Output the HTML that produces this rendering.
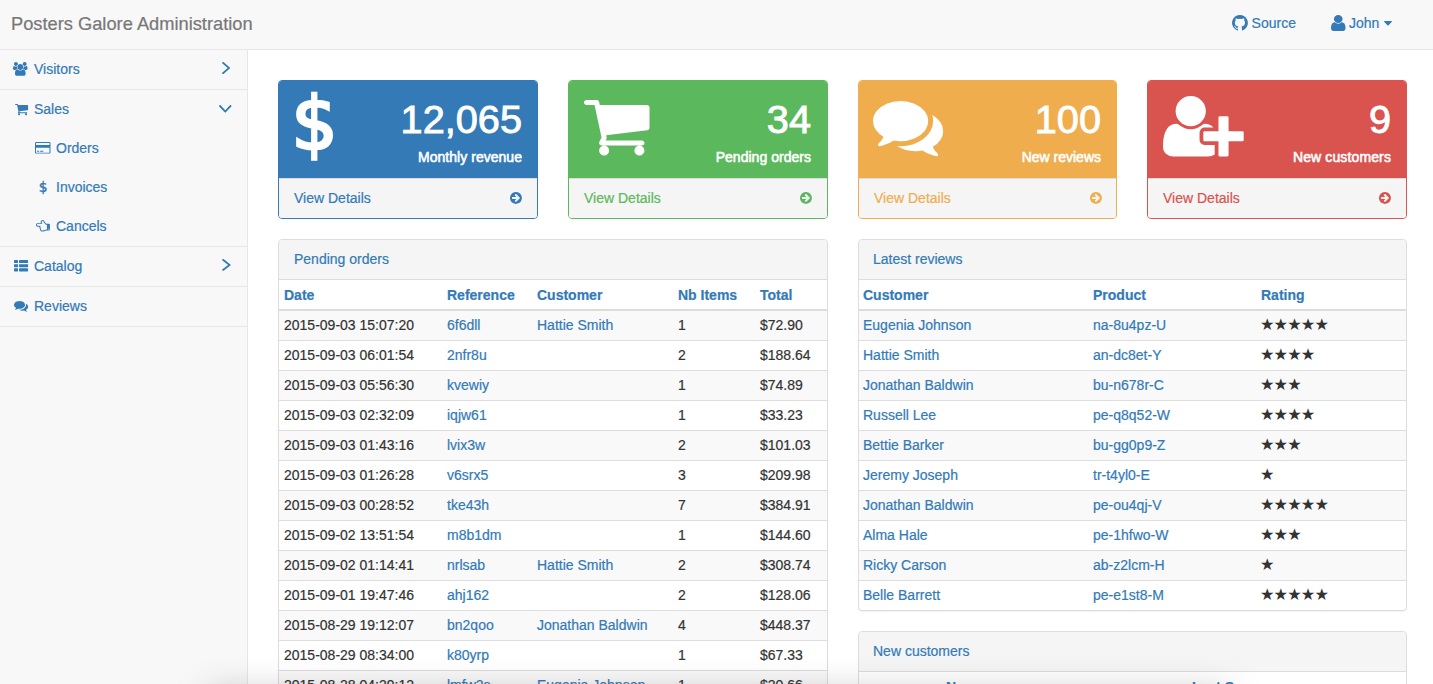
<!DOCTYPE html><html lang="en"><head><meta charset="utf-8"><title>Posters Galore Administration</title><style>
*{box-sizing:border-box}
html,body{margin:0;padding:0}
body{width:1433px;height:684px;overflow:hidden;position:relative;background:#f8f8f8;font-family:"Liberation Sans",sans-serif;font-size:14px;line-height:19px;color:#333;-webkit-text-stroke:0.2px}
a{color:#337ab7;text-decoration:none}
.ic{position:absolute;display:block;overflow:visible}
#nav{position:absolute;left:0;top:0;width:1433px;height:50px;background:#f8f8f8;border-bottom:1px solid #e7e7e7}
#brand{position:absolute;left:11px;top:0;font-size:18.28px;line-height:48px;color:#777;white-space:nowrap}
.tr{position:absolute;top:0;line-height:47px;white-space:nowrap}
#side{position:absolute;left:0;top:50px;width:248px;height:634px;border-right:1px solid #e7e7e7;background:#f8f8f8}
#side ul{list-style:none;margin:0;padding:0}
#side li.top{border-bottom:1px solid #e7e7e7}
#side a{display:block;height:39px;line-height:38px;padding-left:34px;white-space:nowrap}
#side ul ul a{padding-left:56px}
#main{position:absolute;left:248px;top:50px;width:1185px;height:634px;background:#fff}
.card{position:absolute;top:80px;height:139px;border:1px solid;border-radius:4px;background:#fff;overflow:hidden}
.card .hd{position:absolute;left:0;top:0;right:0;height:97px;color:#fff;-webkit-text-stroke:0.55px}
.card .huge{-webkit-text-stroke:0.9px;position:absolute;right:15px;top:10px;font-size:39.7px;line-height:57px;white-space:nowrap}
.card .lbl{position:absolute;right:15px;top:67px;line-height:19px;white-space:nowrap}
.card .ft{position:absolute;left:0;right:0;top:97px;height:40px;border-top:1px solid #ddd;background:#f5f5f5;padding:10px 15px;line-height:19px}
.panel{position:absolute;border:1px solid #ddd;border-radius:4px;background:#fff;box-shadow:0 1px 1px rgba(0,0,0,.05)}
.panel .ph{height:40px;border-bottom:1px solid #ddd;background:#f5f5f5;padding:0 15px;line-height:38px;color:#337ab7;border-radius:3px 3px 0 0}
table{border-collapse:separate;border-spacing:0;width:100%;table-layout:fixed}
th{text-align:left;font-weight:bold;color:#337ab7;height:31px;padding:6px 5px 4px 5px;line-height:19px;border-bottom:2px solid #ddd;white-space:nowrap;overflow:hidden}
td{height:30px;padding:5px 5px 5px 5px;line-height:19px;border-top:1px solid #ddd;white-space:nowrap;overflow:hidden}
tbody tr:first-child td{border-top:0;height:29px}
tbody tr:nth-child(odd) td{background:#f9f9f9}
.rp th:first-child,.rp td:first-child{padding-left:4px}
.st{font-family:"DejaVu Sans",sans-serif;font-size:16.2px;letter-spacing:-0.9px;color:#333;line-height:19px;display:inline-block;vertical-align:top;position:relative;top:-1px;left:-1px;-webkit-text-stroke:0}
</style></head><body>
<div id="main"></div>
<div id="nav"><a id="brand">Posters Galore Administration</a>
<svg class="ic" style="left:1232.20px;top:15.40px;width:15.90px;height:15.50px;" viewBox="0 128 1536 1498" preserveAspectRatio="none"><path fill="#337ab7" transform="translate(0,1536) scale(1,-1)" d="M768 1408q209 0 385.5 -103t279.5 -279.5t103 -385.5q0 -251 -146.5 -451.5t-378.5 -277.5q-27 -5 -40 7t-13 30q0 3 0.5 76.5t0.5 134.5q0 97 -52 142q57 6 102.5 18t94 39t81 66.5t53 105t20.5 150.5q0 119 -79 206q37 91 -8 204q-28 9 -81 -11t-92 -44l-38 -24 q-93 26 -192 26t-192 -26q-16 11 -42.5 27t-83.5 38.5t-85 13.5q-45 -113 -8 -204q-79 -87 -79 -206q0 -85 20.5 -150t52.5 -105t80.5 -67t94 -39t102.5 -18q-39 -36 -49 -103q-21 -10 -45 -15t-57 -5t-65.5 21.5t-55.5 62.5q-19 32 -48.5 52t-49.5 24l-20 3q-21 0 -29 -4.5 t-5 -11.5t9 -14t13 -12l7 -5q22 -10 43.5 -38t31.5 -51l10 -23q13 -38 44 -61.5t67 -30t69.5 -7t55.5 3.5l23 4q0 -38 0.5 -88.5t0.5 -54.5q0 -18 -13 -30t-40 -7q-232 77 -378.5 277.5t-146.5 451.5q0 209 103 385.5t279.5 279.5t385.5 103zM291 305q3 7 -7 12 q-10 3 -13 -2q-3 -7 7 -12q9 -6 13 2zM322 271q7 5 -2 16q-10 9 -16 3q-7 -5 2 -16q10 -10 16 -3zM352 226q9 7 0 19q-8 13 -17 6q-9 -5 0 -18t17 -7zM394 184q8 8 -4 19q-12 12 -20 3q-9 -8 4 -19q12 -12 20 -3zM451 159q3 11 -13 16q-15 4 -19 -7t13 -15q15 -6 19 6z M514 154q0 13 -17 11q-16 0 -16 -11q0 -13 17 -11q16 0 16 11zM572 164q-2 11 -18 9q-16 -3 -14 -15t18 -8t14 14z"/></svg>
<a class="tr" style="left:1251.6px">Source</a>
<svg class="ic" style="left:1330.80px;top:15.20px;width:14.50px;height:16.00px;" viewBox="0 128 1280 1536" preserveAspectRatio="none"><path fill="#337ab7" transform="translate(0,1536) scale(1,-1)" d="M1280 137q0 -109 -62.5 -187t-150.5 -78h-854q-88 0 -150.5 78t-62.5 187q0 85 8.5 160.5t31.5 152t58.5 131t94 89t134.5 34.5q131 -128 313 -128t313 128q76 0 134.5 -34.5t94 -89t58.5 -131t31.5 -152t8.5 -160.5zM1024 1024q0 -159 -112.5 -271.5t-271.5 -112.5 t-271.5 112.5t-112.5 271.5t112.5 271.5t271.5 112.5t271.5 -112.5t112.5 -271.5z"/></svg>
<a class="tr" style="left:1349px">John</a>
<svg class="ic" style="left:1384.00px;top:20.90px;width:8.00px;height:4.60px;" viewBox="0 640 1024 576" preserveAspectRatio="none"><path fill="#337ab7" transform="translate(0,1536) scale(1,-1)" d="M1024 832q0 -26 -19 -45l-448 -448q-19 -19 -45 -19t-45 19l-448 448q-19 19 -19 45t19 45t45 19h896q26 0 45 -19t19 -45z"/></svg>
</div>
<div id="side"><ul>
<li class="top"><a>Visitors</a></li>
<li class="top"><a>Sales</a><ul><li><a>Orders</a></li><li><a>Invoices</a></li><li><a>Cancels</a></li></ul></li>
<li class="top"><a>Catalog</a></li>
<li class="top"><a>Reviews</a></li>
</ul></div>
<svg class="ic" style="left:13.40px;top:62.00px;width:14.60px;height:13.80px;" viewBox="0 0 1920 1792" preserveAspectRatio="none"><path fill="#337ab7" transform="translate(0,1536) scale(1,-1)" d="M593 640q-162 -5 -265 -128h-134q-82 0 -138 40.5t-56 118.5q0 353 124 353q6 0 43.5 -21t97.5 -42.5t119 -21.5q67 0 133 23q-5 -37 -5 -66q0 -139 81 -256zM1664 3q0 -120 -73 -189.5t-194 -69.5h-874q-121 0 -194 69.5t-73 189.5q0 53 3.5 103.5t14 109t26.5 108.5 t43 97.5t62 81t85.5 53.5t111.5 20q10 0 43 -21.5t73 -48t107 -48t135 -21.5t135 21.5t107 48t73 48t43 21.5q61 0 111.5 -20t85.5 -53.5t62 -81t43 -97.5t26.5 -108.5t14 -109t3.5 -103.5zM640 1280q0 -106 -75 -181t-181 -75t-181 75t-75 181t75 181t181 75t181 -75 t75 -181zM1344 896q0 -159 -112.5 -271.5t-271.5 -112.5t-271.5 112.5t-112.5 271.5t112.5 271.5t271.5 112.5t271.5 -112.5t112.5 -271.5zM1920 671q0 -78 -56 -118.5t-138 -40.5h-134q-103 123 -265 128q81 117 81 256q0 29 -5 66q66 -23 133 -23q59 0 119 21.5t97.5 42.5 t43.5 21q124 0 124 -353zM1792 1280q0 -106 -75 -181t-181 -75t-181 75t-75 181t75 181t181 75t181 -75t75 -181z"/></svg>
<svg class="ic" style="left:221.70px;top:62.00px;width:8.20px;height:12.10px;" viewBox="14 462 580 996" preserveAspectRatio="none"><path fill="#337ab7" transform="translate(0,1536) scale(1,-1)" d="M595 576q0 -13 -10 -23l-466 -466q-10 -10 -23 -10t-23 10l-50 50q-10 10 -10 23t10 23l393 393l-393 393q-10 10 -10 23t10 23l50 50q10 10 23 10t23 -10l466 -466q10 -10 10 -23z"/></svg>
<svg class="ic" style="left:14.50px;top:103.60px;width:13.10px;height:11.30px;" viewBox="0 256 1664 1408" preserveAspectRatio="none"><path fill="#337ab7" transform="translate(0,1536) scale(1,-1)" d="M640 0q0 -52 -38 -90t-90 -38t-90 38t-38 90t38 90t90 38t90 -38t38 -90zM1536 0q0 -52 -38 -90t-90 -38t-90 38t-38 90t38 90t90 38t90 -38t38 -90zM1664 1088v-512q0 -24 -16.5 -42.5t-40.5 -21.5l-1044 -122q13 -60 13 -70q0 -16 -24 -64h920q26 0 45 -19t19 -45 t-19 -45t-45 -19h-1024q-26 0 -45 19t-19 45q0 11 8 31.5t16 36t21.5 40t15.5 29.5l-177 823h-204q-26 0 -45 19t-19 45t19 45t45 19h256q16 0 28.5 -6.5t19.5 -15.5t13 -24.5t8 -26t5.5 -29.5t4.5 -26h1201q26 0 45 -19t19 -45z"/></svg>
<svg class="ic" style="left:218.80px;top:104.60px;width:12.50px;height:7.70px;" viewBox="78 654 996 580" preserveAspectRatio="none"><path fill="#337ab7" transform="translate(0,1536) scale(1,-1)" d="M1075 800q0 -13 -10 -23l-466 -466q-10 -10 -23 -10t-23 10l-466 466q-10 10 -10 23t10 23l50 50q10 10 23 10t23 -10l393 -393l393 393q10 10 23 10t23 -10l50 -50q10 -10 10 -23z"/></svg>
<svg class="ic" style="left:35.00px;top:142.30px;width:15.50px;height:11.60px;" viewBox="0 128 1920 1536" preserveAspectRatio="none"><path fill="#337ab7" transform="translate(0,1536) scale(1,-1)" d="M1760 1408q66 0 113 -47t47 -113v-1216q0 -66 -47 -113t-113 -47h-1600q-66 0 -113 47t-47 113v1216q0 66 47 113t113 47h1600zM160 1280q-13 0 -22.5 -9.5t-9.5 -22.5v-224h1664v224q0 13 -9.5 22.5t-22.5 9.5h-1600zM1760 0q13 0 22.5 9.5t9.5 22.5v608h-1664v-608 q0 -13 9.5 -22.5t22.5 -9.5h1600zM256 128v128h256v-128h-256zM640 128v128h384v-128h-384z"/></svg>
<span style="position:absolute;left:38.8px;top:178px;font-family:'DejaVu Sans',sans-serif;font-size:13.8px;line-height:19px;color:#337ab7;-webkit-text-stroke:0.45px #337ab7">$</span>
<svg class="ic" style="left:36.00px;top:220.10px;width:13.90px;height:11.50px;" viewBox="0 128 1792 1536" preserveAspectRatio="none"><path fill="#337ab7" transform="translate(0,1536) scale(1,-1)" d="M1376 128h32v640h-32q-35 0 -67.5 12t-62.5 37t-50 46t-49 54q-8 9 -12 14q-72 81 -112 145q-14 22 -38 68q-1 3 -10.5 22.5t-18.5 36t-20 35.5t-21.5 30.5t-18.5 11.5q-71 0 -115.5 -30.5t-44.5 -97.5q0 -43 15 -84.5t33 -68t33 -55t15 -48.5h-576q-50 0 -89 -38.5 t-39 -89.5q0 -52 38 -90t90 -38h331q-15 -17 -25 -47.5t-10 -55.5q0 -69 53 -119q-18 -32 -18 -69t17.5 -73.5t47.5 -52.5q-4 -24 -4 -56q0 -85 48.5 -126t135.5 -41q84 0 183 32t194 64t167 32zM1664 192q0 26 -19 45t-45 19t-45 -19t-19 -45t19 -45t45 -19t45 19t19 45z M1792 768v-640q0 -53 -37.5 -90.5t-90.5 -37.5h-288q-59 0 -223 -59q-190 -69 -317 -69q-142 0 -230 77.5t-87 217.5l1 5q-61 76 -61 178q0 22 3 43q-33 57 -37 119h-169q-105 0 -180.5 76t-75.5 181q0 103 76 179t180 76h374q-22 60 -22 128q0 122 81.5 189t206.5 67 q38 0 69.5 -17.5t55 -49.5t40.5 -63t37 -72t33 -62q35 -55 100 -129q2 -3 14 -17t19 -21.5t20.5 -21.5t24 -22.5t22.5 -18t23.5 -14t21.5 -4.5h288q53 0 90.5 -37.5t37.5 -90.5z"/></svg>
<svg class="ic" style="left:13.90px;top:259.80px;width:14.10px;height:11.40px;" viewBox="0 128 1792 1408" preserveAspectRatio="none"><path fill="#337ab7" transform="translate(0,1536) scale(1,-1)" d="M512 288v-192q0 -40 -28 -68t-68 -28h-320q-40 0 -68 28t-28 68v192q0 40 28 68t68 28h320q40 0 68 -28t28 -68zM512 800v-192q0 -40 -28 -68t-68 -28h-320q-40 0 -68 28t-28 68v192q0 40 28 68t68 28h320q40 0 68 -28t28 -68zM1792 288v-192q0 -40 -28 -68t-68 -28h-960 q-40 0 -68 28t-28 68v192q0 40 28 68t68 28h960q40 0 68 -28t28 -68zM512 1312v-192q0 -40 -28 -68t-68 -28h-320q-40 0 -68 28t-28 68v192q0 40 28 68t68 28h320q40 0 68 -28t28 -68zM1792 800v-192q0 -40 -28 -68t-68 -28h-960q-40 0 -68 28t-28 68v192q0 40 28 68t68 28 h960q40 0 68 -28t28 -68zM1792 1312v-192q0 -40 -28 -68t-68 -28h-960q-40 0 -68 28t-28 68v192q0 40 28 68t68 28h960q40 0 68 -28t28 -68z"/></svg>
<svg class="ic" style="left:221.50px;top:259.40px;width:8.80px;height:11.80px;" viewBox="14 462 580 996" preserveAspectRatio="none"><path fill="#337ab7" transform="translate(0,1536) scale(1,-1)" d="M595 576q0 -13 -10 -23l-466 -466q-10 -10 -23 -10t-23 10l-50 50q-10 10 -10 23t10 23l393 393l-393 393q-10 10 -10 23t10 23l50 50q10 10 23 10t23 -10l466 -466q10 -10 10 -23z"/></svg>
<svg class="ic" style="left:13.90px;top:301.30px;width:14.10px;height:10.70px;" viewBox="0 256 1792 1408" preserveAspectRatio="none"><path fill="#337ab7" transform="translate(0,1536) scale(1,-1)" d="M1408 768q0 -139 -94 -257t-256.5 -186.5t-353.5 -68.5q-86 0 -176 16q-124 -88 -278 -128q-36 -9 -86 -16h-3q-11 0 -20.5 8t-11.5 21q-1 3 -1 6.5t0.5 6.5t2 6l2.5 5t3.5 5.5t4 5t4.5 5t4 4.5q5 6 23 25t26 29.5t22.5 29t25 38.5t20.5 44q-124 72 -195 177t-71 224 q0 139 94 257t256.5 186.5t353.5 68.5t353.5 -68.5t256.5 -186.5t94 -257zM1792 512q0 -120 -71 -224.5t-195 -176.5q10 -24 20.5 -44t25 -38.5t22.5 -29t26 -29.5t23 -25q1 -1 4 -4.5t4.5 -5t4 -5t3.5 -5.5l2.5 -5t2 -6t0.5 -6.5t-1 -6.5q-3 -14 -13 -22t-22 -7 q-50 7 -86 16q-154 40 -278 128q-90 -16 -176 -16q-271 0 -472 132q58 -4 88 -4q161 0 309 45t264 129q125 92 192 212t67 254q0 77 -23 152q129 -71 204 -178t75 -230z"/></svg>
<div class="card" style="left:278px;width:260px;border-color:#337ab7"><div class="hd" style="background:#337ab7"><div class="huge" style="right:15px">12,065</div><div class="lbl" style="right:15px;letter-spacing:0.03px">Monthly revenue</div></div><a class="ft" style="color:#337ab7">View Details</a></div>
<svg class="ic" style="left:509.80px;top:192.10px;width:11.90px;height:11.90px;" viewBox="0 128 1536 1536" preserveAspectRatio="none"><path fill="#337ab7" transform="translate(0,1536) scale(1,-1)" d="M1285 640q0 27 -18 45l-91 91l-362 362q-18 18 -45 18t-45 -18l-91 -91q-18 -18 -18 -45t18 -45l189 -189h-502q-26 0 -45 -19t-19 -45v-128q0 -26 19 -45t45 -19h502l-189 -189q-19 -19 -19 -45t19 -45l91 -91q18 -18 45 -18t45 18l362 362l91 91q18 18 18 45zM1536 640 q0 -209 -103 -385.5t-279.5 -279.5t-385.5 -103t-385.5 103t-279.5 279.5t-103 385.5t103 385.5t279.5 279.5t385.5 103t385.5 -103t279.5 -279.5t103 -385.5z"/></svg>
<div class="card" style="left:568px;width:260px;border-color:#5cb85c"><div class="hd" style="background:#5cb85c"><div class="huge" style="right:16px">34</div><div class="lbl" style="right:16px;letter-spacing:0.03px">Pending orders</div></div><a class="ft" style="color:#5cb85c">View Details</a></div>
<svg class="ic" style="left:799.80px;top:192.10px;width:11.90px;height:11.90px;" viewBox="0 128 1536 1536" preserveAspectRatio="none"><path fill="#5cb85c" transform="translate(0,1536) scale(1,-1)" d="M1285 640q0 27 -18 45l-91 91l-362 362q-18 18 -45 18t-45 -18l-91 -91q-18 -18 -18 -45t18 -45l189 -189h-502q-26 0 -45 -19t-19 -45v-128q0 -26 19 -45t45 -19h502l-189 -189q-19 -19 -19 -45t19 -45l91 -91q18 -18 45 -18t45 18l362 362l91 91q18 18 18 45zM1536 640 q0 -209 -103 -385.5t-279.5 -279.5t-385.5 -103t-385.5 103t-279.5 279.5t-103 385.5t103 385.5t279.5 279.5t385.5 103t385.5 -103t279.5 -279.5t103 -385.5z"/></svg>
<div class="card" style="left:858px;width:259px;border-color:#f0ad4e"><div class="hd" style="background:#f0ad4e"><div class="huge" style="right:15px">100</div><div class="lbl" style="right:15px;letter-spacing:0px">New reviews</div></div><a class="ft" style="color:#f0ad4e">View Details</a></div>
<svg class="ic" style="left:1089.50px;top:192.10px;width:11.90px;height:11.90px;" viewBox="0 128 1536 1536" preserveAspectRatio="none"><path fill="#f0ad4e" transform="translate(0,1536) scale(1,-1)" d="M1285 640q0 27 -18 45l-91 91l-362 362q-18 18 -45 18t-45 -18l-91 -91q-18 -18 -18 -45t18 -45l189 -189h-502q-26 0 -45 -19t-19 -45v-128q0 -26 19 -45t45 -19h502l-189 -189q-19 -19 -19 -45t19 -45l91 -91q18 -18 45 -18t45 18l362 362l91 91q18 18 18 45zM1536 640 q0 -209 -103 -385.5t-279.5 -279.5t-385.5 -103t-385.5 103t-279.5 279.5t-103 385.5t103 385.5t279.5 279.5t385.5 103t385.5 -103t279.5 -279.5t103 -385.5z"/></svg>
<div class="card" style="left:1147px;width:260px;border-color:#d9534f"><div class="hd" style="background:#d9534f"><div class="huge" style="right:15px">9</div><div class="lbl" style="right:15px;letter-spacing:0.12px">New customers</div></div><a class="ft" style="color:#d9534f">View Details</a></div>
<svg class="ic" style="left:1379.30px;top:192.10px;width:11.90px;height:11.90px;" viewBox="0 128 1536 1536" preserveAspectRatio="none"><path fill="#d9534f" transform="translate(0,1536) scale(1,-1)" d="M1285 640q0 27 -18 45l-91 91l-362 362q-18 18 -45 18t-45 -18l-91 -91q-18 -18 -18 -45t18 -45l189 -189h-502q-26 0 -45 -19t-19 -45v-128q0 -26 19 -45t45 -19h502l-189 -189q-19 -19 -19 -45t19 -45l91 -91q18 -18 45 -18t45 18l362 362l91 91q18 18 18 45zM1536 640 q0 -209 -103 -385.5t-279.5 -279.5t-385.5 -103t-385.5 103t-279.5 279.5t-103 385.5t103 385.5t279.5 279.5t385.5 103t385.5 -103t279.5 -279.5t103 -385.5z"/></svg>
<span id="bigd" style="position:absolute;left:291.4px;top:74px;font-family:'DejaVu Sans',sans-serif;-webkit-text-stroke:2.7px #fff;font-size:72.5px;line-height:100px;color:#fff">$</span>
<svg class="ic" style="left:583.90px;top:100.40px;width:65.50px;height:55.60px;" viewBox="0 256 1664 1408" preserveAspectRatio="none"><path fill="#fff" transform="translate(0,1536) scale(1,-1)" d="M640 0q0 -52 -38 -90t-90 -38t-90 38t-38 90t38 90t90 38t90 -38t38 -90zM1536 0q0 -52 -38 -90t-90 -38t-90 38t-38 90t38 90t90 38t90 -38t38 -90zM1664 1088v-512q0 -24 -16.5 -42.5t-40.5 -21.5l-1044 -122q13 -60 13 -70q0 -16 -24 -64h920q26 0 45 -19t19 -45 t-19 -45t-45 -19h-1024q-26 0 -45 19t-19 45q0 11 8 31.5t16 36t21.5 40t15.5 29.5l-177 823h-204q-26 0 -45 19t-19 45t19 45t45 19h256q16 0 28.5 -6.5t19.5 -15.5t13 -24.5t8 -26t5.5 -29.5t4.5 -26h1201q26 0 45 -19t19 -45z"/></svg>
<svg class="ic" style="left:873.40px;top:100.90px;width:70.20px;height:55.20px;" viewBox="0 256 1792 1408" preserveAspectRatio="none"><path fill="#fff" transform="translate(0,1536) scale(1,-1)" d="M1408 768q0 -139 -94 -257t-256.5 -186.5t-353.5 -68.5q-86 0 -176 16q-124 -88 -278 -128q-36 -9 -86 -16h-3q-11 0 -20.5 8t-11.5 21q-1 3 -1 6.5t0.5 6.5t2 6l2.5 5t3.5 5.5t4 5t4.5 5t4 4.5q5 6 23 25t26 29.5t22.5 29t25 38.5t20.5 44q-124 72 -195 177t-71 224 q0 139 94 257t256.5 186.5t353.5 68.5t353.5 -68.5t256.5 -186.5t94 -257zM1792 512q0 -120 -71 -224.5t-195 -176.5q10 -24 20.5 -44t25 -38.5t22.5 -29t26 -29.5t23 -25q1 -1 4 -4.5t4.5 -5t4 -5t3.5 -5.5l2.5 -5t2 -6t0.5 -6.5t-1 -6.5q-3 -14 -13 -22t-22 -7 q-50 7 -86 16q-154 40 -278 128q-90 -16 -176 -16q-271 0 -472 132q58 -4 88 -4q161 0 309 45t264 129q125 92 192 212t67 254q0 77 -23 152q129 -71 204 -178t75 -230z"/></svg>
<svg class="ic" style="left:1162.90px;top:95.70px;width:80.70px;height:60.40px;" viewBox="0 128 2048 1536" preserveAspectRatio="none"><path fill="#fff" transform="translate(0,1536) scale(1,-1)" d="M704 640q-159 0 -271.5 112.5t-112.5 271.5t112.5 271.5t271.5 112.5t271.5 -112.5t112.5 -271.5t-112.5 -271.5t-271.5 -112.5zM1664 512h352q13 0 22.5 -9.5t9.5 -22.5v-192q0 -13 -9.5 -22.5t-22.5 -9.5h-352v-352q0 -13 -9.5 -22.5t-22.5 -9.5h-192q-13 0 -22.5 9.5 t-9.5 22.5v352h-352q-13 0 -22.5 9.5t-9.5 22.5v192q0 13 9.5 22.5t22.5 9.5h352v352q0 13 9.5 22.5t22.5 9.5h192q13 0 22.5 -9.5t9.5 -22.5v-352zM928 288q0 -52 38 -90t90 -38h256v-238q-68 -50 -171 -50h-874q-121 0 -194 69t-73 190q0 53 3.5 103.5t14 109t26.5 108.5 t43 97.5t62 81t85.5 53.5t111.5 20q19 0 39 -17q79 -61 154.5 -91.5t164.5 -30.5t164.5 30.5t154.5 91.5q20 17 39 17q132 0 217 -96h-223q-52 0 -90 -38t-38 -90v-192z"/></svg>
<div class="panel" style="left:278px;top:239px;width:550px;height:520px"><div class="ph">Pending orders</div><table><colgroup><col style="width:163px"><col style="width:90px"><col style="width:141px"><col style="width:82px"><col></colgroup><thead><tr><th>Date</th><th>Reference</th><th>Customer</th><th>Nb Items</th><th>Total</th></tr></thead><tbody>
<tr><td>2015-09-03 15:07:20</td><td><a>6f6dll</a></td><td><a>Hattie Smith</a></td><td>1</td><td>$72.90</td></tr>
<tr><td>2015-09-03 06:01:54</td><td><a>2nfr8u</a></td><td><a></a></td><td>2</td><td>$188.64</td></tr>
<tr><td>2015-09-03 05:56:30</td><td><a>kvewiy</a></td><td><a></a></td><td>1</td><td>$74.89</td></tr>
<tr><td>2015-09-03 02:32:09</td><td><a>iqjw61</a></td><td><a></a></td><td>1</td><td>$33.23</td></tr>
<tr><td>2015-09-03 01:43:16</td><td><a>lvix3w</a></td><td><a></a></td><td>2</td><td>$101.03</td></tr>
<tr><td>2015-09-03 01:26:28</td><td><a>v6srx5</a></td><td><a></a></td><td>3</td><td>$209.98</td></tr>
<tr><td>2015-09-03 00:28:52</td><td><a>tke43h</a></td><td><a></a></td><td>7</td><td>$384.91</td></tr>
<tr><td>2015-09-02 13:51:54</td><td><a>m8b1dm</a></td><td><a></a></td><td>1</td><td>$144.60</td></tr>
<tr><td>2015-09-02 01:14:41</td><td><a>nrlsab</a></td><td><a>Hattie Smith</a></td><td>2</td><td>$308.74</td></tr>
<tr><td>2015-09-01 19:47:46</td><td><a>ahj162</a></td><td><a></a></td><td>2</td><td>$128.06</td></tr>
<tr><td>2015-08-29 19:12:07</td><td><a>bn2qoo</a></td><td><a>Jonathan Baldwin</a></td><td>4</td><td>$448.37</td></tr>
<tr><td>2015-08-29 08:34:00</td><td><a>k80yrp</a></td><td><a></a></td><td>1</td><td>$67.33</td></tr>
<tr><td>2015-08-28 04:29:12</td><td><a>lmfw2s</a></td><td><a>Eugenia Johnson</a></td><td>1</td><td>$20.66</td></tr>
<tr><td>2015-08-27 11:02:45</td><td><a>p3x9ad</a></td><td><a></a></td><td>2</td><td>$95.10</td></tr>
</tbody></table></div>
<div class="panel rp" style="left:858px;top:239px;width:549px;height:372px"><div class="ph" style="padding-left:14px">Latest reviews</div><table><colgroup><col style="width:229px"><col style="width:168px"><col></colgroup><thead><tr><th>Customer</th><th>Product</th><th>Rating</th></tr></thead><tbody>
<tr><td><a>Eugenia Johnson</a></td><td><a>na-8u4pz-U</a></td><td><span class="st">★★★★★</span></td></tr>
<tr><td><a>Hattie Smith</a></td><td><a>an-dc8et-Y</a></td><td><span class="st">★★★★</span></td></tr>
<tr><td><a>Jonathan Baldwin</a></td><td><a>bu-n678r-C</a></td><td><span class="st">★★★</span></td></tr>
<tr><td><a>Russell Lee</a></td><td><a>pe-q8q52-W</a></td><td><span class="st">★★★★</span></td></tr>
<tr><td><a>Bettie Barker</a></td><td><a>bu-gg0p9-Z</a></td><td><span class="st">★★★</span></td></tr>
<tr><td><a>Jeremy Joseph</a></td><td><a>tr-t4yl0-E</a></td><td><span class="st">★</span></td></tr>
<tr><td><a>Jonathan Baldwin</a></td><td><a>pe-ou4qj-V</a></td><td><span class="st">★★★★★</span></td></tr>
<tr><td><a>Alma Hale</a></td><td><a>pe-1hfwo-W</a></td><td><span class="st">★★★</span></td></tr>
<tr><td><a>Ricky Carson</a></td><td><a>ab-z2lcm-H</a></td><td><span class="st">★</span></td></tr>
<tr><td><a>Belle Barrett</a></td><td><a>pe-e1st8-M</a></td><td><span class="st">★★★★★</span></td></tr>
</tbody></table></div>
<div class="panel" style="left:858px;top:631px;width:549px;height:200px"><div class="ph" style="padding-left:14px">New customers</div><table><colgroup><col style="width:60px"><col style="width:268px"><col></colgroup><thead><tr><th></th><th style="padding-left:27px">Name</th><th style="padding-left:5px">Last Seen</th></tr></thead><tbody><tr><td></td><td><a>Eugenia Johnson</a></td><td>2015-09-03</td></tr></tbody></table></div>
<div style="position:absolute;left:208px;top:694px;width:1020px;height:40px;box-shadow:0 0 36px rgba(0,0,0,.26)"></div>
</body></html>
